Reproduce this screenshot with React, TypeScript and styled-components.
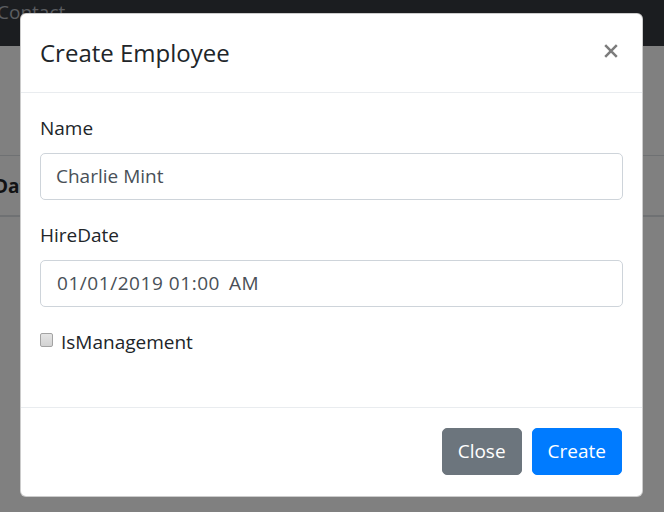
import React from "react";
import styled, { createGlobalStyle } from "styled-components";

const GlobalStyle = createGlobalStyle`
  html, body {
    margin: 0;
    padding: 0;
    background: #808080;
  }
  body {
    font-family: "Open Sans", "Noto Sans", "Liberation Sans", sans-serif;
    -webkit-font-smoothing: antialiased;
  }
  * { box-sizing: border-box; }
`;

const Page = styled.div`
  position: relative;
  width: 664px;
  height: 512px;
  overflow: hidden;
  background: #808080;
`;

const Navbar = styled.div`
  height: 46px;
  background: #1b1d20;
  display: flex;
  align-items: flex-start;
`;

const NavLink = styled.span`
  margin-left: -3px;
  margin-top: -3px;
  font-size: 19px;
  line-height: 30px;
  color: #5b5d61;
`;

const Content = styled.div`
  padding-top: 109px;
`;

const TableHead = styled.div`
  display: flex;
  align-items: center;
  height: 62px;
  border-top: 1px solid #6f7173;
  border-bottom: 2px solid #6f7173;
`;

const Th = styled.span`
  margin-left: -6px;
  font-size: 19px;
  font-weight: 700;
  color: #111213;
`;

const Modal = styled.div`
  position: absolute;
  left: 20px;
  top: 13px;
  width: 623px;
  background: #fff;
  border: 1px solid rgba(0, 0, 0, 0.2);
  border-radius: 6px;
  display: flex;
  flex-direction: column;
`;

const Header = styled.div`
  display: flex;
  align-items: flex-start;
  padding: 20px 19px 20px;
  border-bottom: 1px solid #e9ecef;
`;

const Title = styled.h5`
  margin: 0;
  font-size: 24px;
  line-height: 37.5px;
  font-weight: 500;
  color: #212529;
`;

const CloseX = styled.button`
  margin-left: auto;
  margin-top: 10px;
  margin-right: 5px;
  padding: 0;
  border: 0;
  background: transparent;
  width: 14px;
  height: 14px;
  display: flex;
  color: #7c7c7c;
`;

const Body = styled.div`
  padding: 20px 19px 30px;
`;

const Group = styled.div`
  margin-bottom: 20px;
`;

const Label = styled.label`
  display: block;
  font-size: 19px;
  line-height: 30px;
  color: #212529;
  margin-bottom: 10px;
`;

const Field = styled.div<{ $spacing?: number }>`
  height: 47px;
  border: 1px solid #ced4da;
  border-radius: 5px;
  padding: 0 15px;
  display: flex;
  align-items: center;
  font-size: 19px;
  color: #495057;
  letter-spacing: ${(p) => p.$spacing ?? 0}px;
  white-space: pre;
`;

const Gap = styled.span<{ $w: number }>`
  display: inline-block;
  width: ${(p) => p.$w}px;
`;

const CheckRow = styled.div`
  display: flex;
  align-items: center;
  height: 30px;
  margin-bottom: 20px;
`;

const Box = styled.span`
  width: 13px;
  height: 14px;
  margin-top: -3px;
  margin-right: 8px;
  border: 1px solid #a3a3a3;
  border-radius: 2px;
  background: linear-gradient(#e4e4e4, #d2d2d2);
`;

const CheckLabel = styled.span`
  font-size: 19px;
  line-height: 30px;
  color: #212529;
`;

const Footer = styled.div`
  display: flex;
  justify-content: flex-end;
  align-items: center;
  padding: 15px 15px 16px;
  border-top: 1px solid #e9ecef;
  gap: 10px;
`;

const Button = styled.button<{ $variant: "secondary" | "primary" }>`
  margin: 5px;
  height: 47px;
  padding: 0 15px;
  border: 1px solid ${(p) => (p.$variant === "primary" ? "#007bff" : "#6c757d")};
  background: ${(p) => (p.$variant === "primary" ? "#007bff" : "#6c757d")};
  color: #fff;
  border-radius: 5px;
  font-family: inherit;
  font-size: 19px;
  line-height: 30px;
  &:first-child { margin-right: 0; }
  &:last-child { margin-left: 0; }
`;

export default function App() {
  return (
    <>
      <GlobalStyle />
      <Page>
        <Navbar>
          <NavLink>Contact</NavLink>
        </Navbar>
        <Content>
          <TableHead>
            <Th>Date</Th>
          </TableHead>
        </Content>
        <Modal>
          <Header>
            <Title>Create Employee</Title>
            <CloseX aria-label="Close">
              <svg width="14" height="14" viewBox="0 0 14 14">
                <path d="M1.2 1.2 L12.8 12.8 M12.8 1.2 L1.2 12.8" stroke="currentColor" strokeWidth="2.5" />
              </svg>
            </CloseX>
          </Header>
          <Body>
            <Group>
              <Label>Name</Label>
              <Field>Charlie Mint</Field>
            </Group>
            <Group>
              <Label>HireDate</Label>
              <Field $spacing={0.55}>
                <Gap $w={1} />
                01/01/2019 01:00<Gap $w={9} />AM
              </Field>
            </Group>
            <CheckRow>
              <Box />
              <CheckLabel>IsManagement</CheckLabel>
            </CheckRow>
          </Body>
          <Footer>
            <Button $variant="secondary">Close</Button>
            <Button $variant="primary">Create</Button>
          </Footer>
        </Modal>
      </Page>
    </>
  );
}
